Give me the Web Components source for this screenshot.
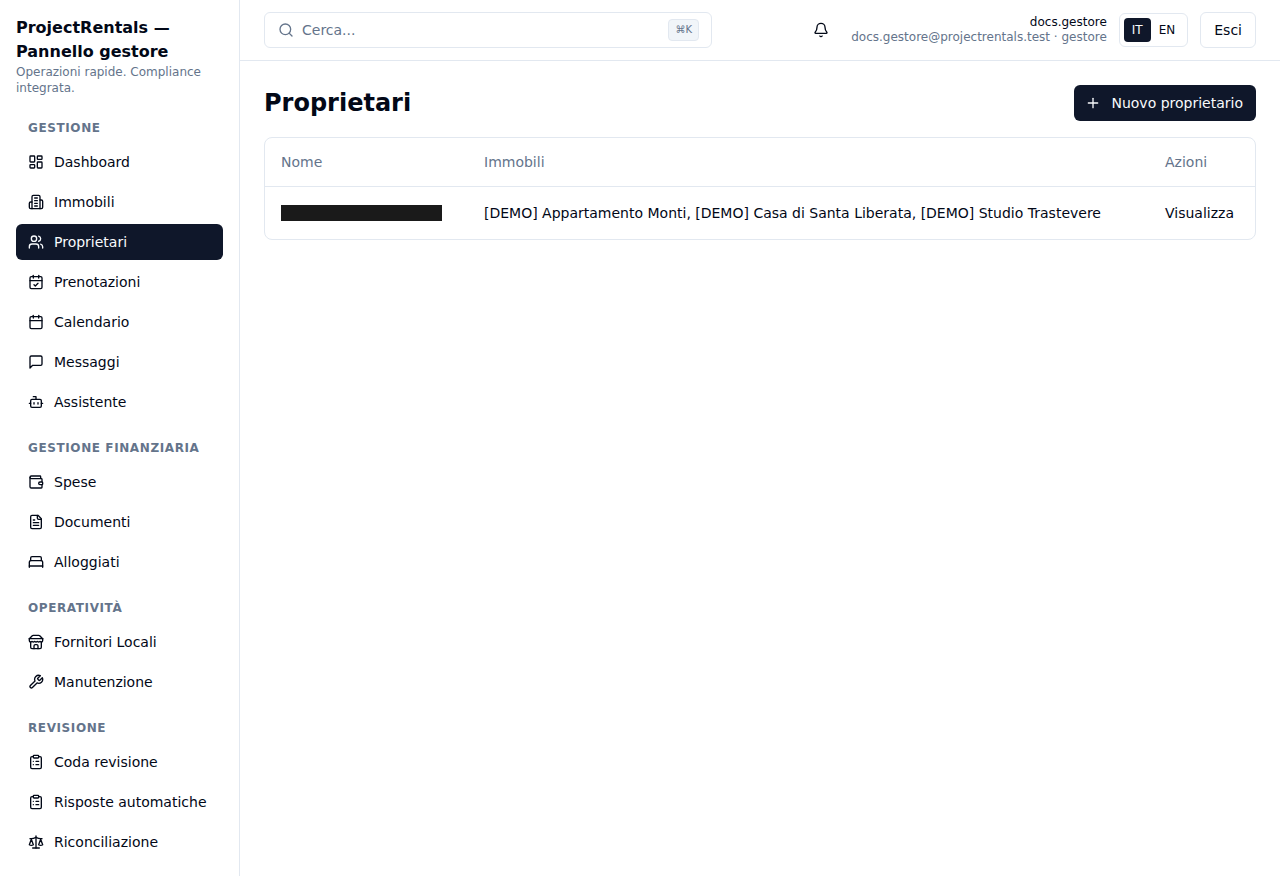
<!DOCTYPE html>
<html lang="it">
<head>
<meta charset="utf-8">
<title>Proprietari</title>
<style>
  html, body { margin: 0; height: 100%; background: #fff; }
  body { font: 14px/20px "DejaVu Sans", sans-serif; color: #020817; overflow: hidden; }
</style>
</head>
<body>
<pr-app>
  <pr-sidebar slot="sidebar" title-text="ProjectRentals — Pannello gestore" tagline="Operazioni rapide. Compliance integrata.">
    <pr-nav-group label="Gestione">
      <pr-nav-item icon="dashboard">Dashboard</pr-nav-item>
      <pr-nav-item icon="building">Immobili</pr-nav-item>
      <pr-nav-item icon="users" active>Proprietari</pr-nav-item>
      <pr-nav-item icon="calendarCheck">Prenotazioni</pr-nav-item>
      <pr-nav-item icon="calendar">Calendario</pr-nav-item>
      <pr-nav-item icon="message">Messaggi</pr-nav-item>
      <pr-nav-item icon="bot">Assistente</pr-nav-item>
    </pr-nav-group>
    <pr-nav-group label="Gestione finanziaria">
      <pr-nav-item icon="wallet">Spese</pr-nav-item>
      <pr-nav-item icon="file">Documenti</pr-nav-item>
      <pr-nav-item icon="bed">Alloggiati</pr-nav-item>
    </pr-nav-group>
    <pr-nav-group label="Operatività">
      <pr-nav-item icon="store">Fornitori Locali</pr-nav-item>
      <pr-nav-item icon="wrench">Manutenzione</pr-nav-item>
    </pr-nav-group>
    <pr-nav-group label="Revisione">
      <pr-nav-item icon="clipboard">Coda revisione</pr-nav-item>
      <pr-nav-item icon="clipboard">Risposte automatiche</pr-nav-item>
      <pr-nav-item icon="scale">Riconciliazione</pr-nav-item>
    </pr-nav-group>
  </pr-sidebar>

  <pr-topbar slot="topbar" user="docs.gestore" detail="docs.gestore@projectrentals.test · gestore"></pr-topbar>

  <pr-page-head heading="Proprietari" action="Nuovo proprietario"></pr-page-head>
  <pr-owners-table></pr-owners-table>
</pr-app>

<script>
;(function scriptLoaded(global){
  "use strict"

  // stroke icons, 24 unit grid
  const ICONS = {
    dashboard: '<rect width="7" height="9" x="3" y="3" rx="1"/><rect width="7" height="5" x="14" y="3" rx="1"/><rect width="7" height="9" x="14" y="12" rx="1"/><rect width="7" height="5" x="3" y="16" rx="1"/>',
    building: '<path d="M6 22V4a2 2 0 0 1 2-2h8a2 2 0 0 1 2 2v18Z"/><path d="M6 12H4a2 2 0 0 0-2 2v6a2 2 0 0 0 2 2h2"/><path d="M18 9h2a2 2 0 0 1 2 2v9a2 2 0 0 1-2 2h-2"/><path d="M10 6h4"/><path d="M10 10h4"/><path d="M10 14h4"/><path d="M10 18h4"/>',
    users: '<path d="M16 21v-2a4 4 0 0 0-4-4H6a4 4 0 0 0-4 4v2"/><circle cx="9" cy="7" r="4"/><path d="M22 21v-2a4 4 0 0 0-3-3.87"/><path d="M16 3.13a4 4 0 0 1 0 7.75"/>',
    calendarCheck: '<path d="M8 2v4"/><path d="M16 2v4"/><rect width="18" height="18" x="3" y="4" rx="2"/><path d="M3 10h18"/><path d="m9 16 2 2 4-4"/>',
    calendar: '<path d="M8 2v4"/><path d="M16 2v4"/><rect width="18" height="18" x="3" y="4" rx="2"/><path d="M3 10h18"/>',
    message: '<path d="M21 15a2 2 0 0 1-2 2H7l-4 4V5a2 2 0 0 1 2-2h14a2 2 0 0 1 2 2z"/>',
    bot: '<path d="M12 8V4H8"/><rect width="16" height="12" x="4" y="8" rx="2"/><path d="M2 14h2"/><path d="M20 14h2"/><path d="M15 13v2"/><path d="M9 13v2"/>',
    wallet: '<path d="M19 7V4a1 1 0 0 0-1-1H5a2 2 0 0 0 0 4h15a1 1 0 0 1 1 1v4h-3a2 2 0 0 0 0 4h3a1 1 0 0 0 1-1v-2a1 1 0 0 0-1-1"/><path d="M3 5v14a2 2 0 0 0 2 2h15a1 1 0 0 0 1-1v-4"/>',
    file: '<path d="M15 2H6a2 2 0 0 0-2 2v16a2 2 0 0 0 2 2h12a2 2 0 0 0 2-2V7Z"/><path d="M14 2v4a2 2 0 0 0 2 2h4"/><path d="M10 9H8"/><path d="M16 13H8"/><path d="M16 17H8"/>',
    bed: '<path d="M2 20v-8a2 2 0 0 1 2-2h16a2 2 0 0 1 2 2v8"/><path d="M4 10V6a2 2 0 0 1 2-2h12a2 2 0 0 1 2 2v4"/><path d="M2 18h20"/>',
    store: '<path d="m2 7 4.41-4.41A2 2 0 0 1 7.83 2h8.34a2 2 0 0 1 1.42.59L22 7"/><path d="M4 12v8a2 2 0 0 0 2 2h12a2 2 0 0 0 2-2v-8"/><path d="M15 22v-4a2 2 0 0 0-2-2h-2a2 2 0 0 0-2 2v4"/><path d="M2 7h20"/><path d="M22 7v3a2 2 0 0 1-2 2a2.7 2.7 0 0 1-1.59-.63.7.7 0 0 0-.82 0A2.7 2.7 0 0 1 16 12a2.7 2.7 0 0 1-1.59-.63.7.7 0 0 0-.82 0A2.7 2.7 0 0 1 12 12a2.7 2.7 0 0 1-1.59-.63.7.7 0 0 0-.82 0A2.7 2.7 0 0 1 8 12a2.7 2.7 0 0 1-1.59-.63.7.7 0 0 0-.82 0A2.7 2.7 0 0 1 4 12a2 2 0 0 1-2-2V7"/>',
    wrench: '<path d="M14.7 6.3a1 1 0 0 0 0 1.4l1.6 1.6a1 1 0 0 0 1.4 0l3.77-3.77a6 6 0 0 1-7.94 7.94l-6.91 6.91a2.12 2.12 0 0 1-3-3l6.91-6.91a6 6 0 0 1 7.94-7.94l-3.76 3.76z"/>',
    clipboard: '<rect width="8" height="4" x="8" y="2" rx="1" ry="1"/><path d="M16 4h2a2 2 0 0 1 2 2v14a2 2 0 0 1-2 2H6a2 2 0 0 1-2-2V6a2 2 0 0 1 2-2h2"/><path d="M12 11h4"/><path d="M12 16h4"/><path d="M8 11h.01"/><path d="M8 16h.01"/>',
    scale: '<path d="m16 16 3-8 3 8c-.87.65-1.92 1-3 1s-2.13-.35-3-1Z"/><path d="m2 16 3-8 3 8c-.87.65-1.92 1-3 1s-2.13-.35-3-1Z"/><path d="M7 21h10"/><path d="M12 3v18"/><path d="M3 7h2c2 0 5-1 7-2 2 1 5 2 7 2h2"/>',
    bell: '<path d="M10.268 21a2 2 0 0 0 3.464 0"/><path d="M3.262 15.326A1 1 0 0 0 4 17h16a1 1 0 0 0 .74-1.673C19.41 13.956 18 12.499 18 8A6 6 0 0 0 6 8c0 4.499-1.411 5.956-2.738 7.326"/>',
    search: '<path d="m21 21-4.34-4.34"/><circle cx="11" cy="11" r="8"/>',
    plus: '<path d="M5 12h14"/><path d="M12 5v14"/>'
  }

  function icon(name) {
    return `<svg width="16" height="16" viewBox="0 0 24 24" fill="none" stroke="currentColor" stroke-width="2" stroke-linecap="round" stroke-linejoin="round" aria-hidden="true">${ICONS[name]}</svg>`
  }


  class Base extends HTMLElement {
    constructor() {
      super()
      this.attachShadow({mode: 'open'})
    }
  }


  class PrApp extends Base {
    connectedCallback() {
      this.shadowRoot.innerHTML = `
        <style>
          :host { display: flex; height: 100vh; overflow: hidden; }
          .col { flex: 1; min-width: 0; display: flex; flex-direction: column; }
          main { padding: 24px; display: flex; flex-direction: column; gap: 16px; }
        </style>
        <slot name="sidebar"></slot>
        <div class="col">
          <slot name="topbar"></slot>
          <main><slot></slot></main>
        </div>
      `
    }
  }


  class PrSidebar extends Base {
    connectedCallback() {
      this.shadowRoot.innerHTML = `
        <style>
          :host {
            display: block;
            box-sizing: border-box;
            flex: none;
            width: 240px;
            height: 100vh;
            padding: 16px;
            border-right: 1px solid #e2e8f0;
            overflow: hidden;
          }
          .title { font-size: 16px; line-height: 24px; font-weight: 700; }
          .tagline { font-size: 12px; line-height: 16px; color: #64748b; }
          nav { display: flex; flex-direction: column; gap: 20px; margin-top: 24px; }
        </style>
        <div class="title">${this.getAttribute('title-text')}</div>
        <div class="tagline">${this.getAttribute('tagline')}</div>
        <nav><slot></slot></nav>
      `
    }
  }


  class PrNavGroup extends Base {
    connectedCallback() {
      this.shadowRoot.innerHTML = `
        <style>
          :host { display: flex; flex-direction: column; gap: 4px; }
          .label {
            padding: 0 12px;
            margin-bottom: 4px;
            font-size: 12px;
            line-height: 16px;
            font-weight: 700;
            letter-spacing: .05em;
            text-transform: uppercase;
            color: #64748b;
          }
        </style>
        <div class="label">${this.getAttribute('label')}</div>
        <slot></slot>
      `
    }
  }


  class PrNavItem extends Base {
    connectedCallback() {
      this.shadowRoot.innerHTML = `
        <style>
          :host {
            display: flex;
            align-items: center;
            gap: 10px;
            height: 36px;
            padding: 0 12px;
            border-radius: 6px;
            font-size: 14px;
            color: #020817;
          }
          :host([active]) { background: #0f172a; color: #f8fafc; }
          svg { flex: none; }
        </style>
        ${icon(this.getAttribute('icon'))}
        <span><slot></slot></span>
      `
    }
  }


  class PrSearch extends Base {
    connectedCallback() {
      this.shadowRoot.innerHTML = `
        <style>
          :host {
            display: flex;
            align-items: center;
            box-sizing: border-box;
            width: 448px;
            height: 36px;
            padding: 0 12px 0 13px;
            gap: 8px;
            border: 1px solid #e2e8f0;
            border-radius: 6px;
            color: #64748b;
          }
          span { flex: 1; }
          kbd {
            box-sizing: border-box;
            height: 22px;
            padding: 0 6px;
            border: 1px solid #e2e8f0;
            border-radius: 4px;
            background: #f1f5f9;
            font: 10px/20px "DejaVu Sans", sans-serif;
          }
        </style>
        ${icon('search')}
        <span>Cerca...</span>
        <kbd>⌘K</kbd>
      `
    }
  }


  class PrLangSwitch extends Base {
    connectedCallback() {
      this.shadowRoot.innerHTML = `
        <style>
          :host {
            display: flex;
            box-sizing: border-box;
            height: 34px;
            padding: 4px;
            border: 1px solid #e2e8f0;
            border-radius: 6px;
            font-size: 12px;
            line-height: 24px;
          }
          span { padding: 0 8px; border-radius: 4px; }
          .on { background: #0f172a; color: #f8fafc; }
        </style>
        <span class="on">IT</span><span>EN</span>
      `
    }
  }


  class PrTopbar extends Base {
    connectedCallback() {
      this.shadowRoot.innerHTML = `
        <style>
          :host {
            display: flex;
            align-items: center;
            gap: 12px;
            box-sizing: border-box;
            height: 61px;
            padding: 0 24px;
            border-bottom: 1px solid #e2e8f0;
          }
          .right { margin-left: auto; display: flex; align-items: center; gap: 12px; }
          .bell { width: 36px; height: 36px; display: flex; align-items: center; justify-content: center; }
          .user { text-align: right; font-size: 12px; line-height: 15px; }
          .user div + div { color: #64748b; }
          .exit {
            box-sizing: border-box;
            height: 36px;
            padding: 0 13px;
            border: 1px solid #e2e8f0;
            border-radius: 6px;
            line-height: 34px;
          }
        </style>
        <pr-search></pr-search>
        <div class="right">
          <div class="bell">${icon('bell')}</div>
          <div class="user">
            <div>${this.getAttribute('user')}</div>
            <div>${this.getAttribute('detail')}</div>
          </div>
          <pr-lang-switch></pr-lang-switch>
          <div class="exit">Esci</div>
        </div>
      `
    }
  }


  class PrPageHead extends Base {
    connectedCallback() {
      this.shadowRoot.innerHTML = `
        <style>
          :host { display: flex; align-items: center; justify-content: space-between; }
          h1 { margin: 0; font-size: 24px; line-height: 32px; font-weight: 700; }
          .btn {
            display: flex;
            align-items: center;
            gap: 10px;
            height: 36px;
            padding: 0 13px 0 11px;
            border-radius: 6px;
            background: #0f172a;
            color: #f8fafc;
          }
        </style>
        <h1>${this.getAttribute('heading')}</h1>
        <div class="btn">${icon('plus')}<span>${this.getAttribute('action')}</span></div>
      `
    }
  }


  class PrOwnersTable extends Base {
    connectedCallback() {
      this.shadowRoot.innerHTML = `
        <style>
          :host {
            display: grid;
            grid-template-columns: 203px 681px 1fr;
            border: 1px solid #e2e8f0;
            border-radius: 8px;
            overflow: hidden;
          }
          .th, .td { padding: 0 16px; display: flex; align-items: center; white-space: nowrap; }
          .th { height: 48px; color: #64748b; border-bottom: 1px solid #e2e8f0; }
          .td { height: 52px; }
          .redacted { width: 161px; height: 16px; background: #1a1a1a; }
        </style>
        <div class="th">Nome</div>
        <div class="th">Immobili</div>
        <div class="th">Azioni</div>
        <div class="td"><div class="redacted"></div></div>
        <div class="td">[DEMO] Appartamento Monti, [DEMO] Casa di Santa Liberata, [DEMO] Studio Trastevere</div>
        <div class="td">Visualizza</div>
      `
    }
  }


  customElements.define('pr-app', PrApp)
  customElements.define('pr-sidebar', PrSidebar)
  customElements.define('pr-nav-group', PrNavGroup)
  customElements.define('pr-nav-item', PrNavItem)
  customElements.define('pr-search', PrSearch)
  customElements.define('pr-lang-switch', PrLangSwitch)
  customElements.define('pr-topbar', PrTopbar)
  customElements.define('pr-page-head', PrPageHead)
  customElements.define('pr-owners-table', PrOwnersTable)

})(window)
</script>
</body>
</html>
